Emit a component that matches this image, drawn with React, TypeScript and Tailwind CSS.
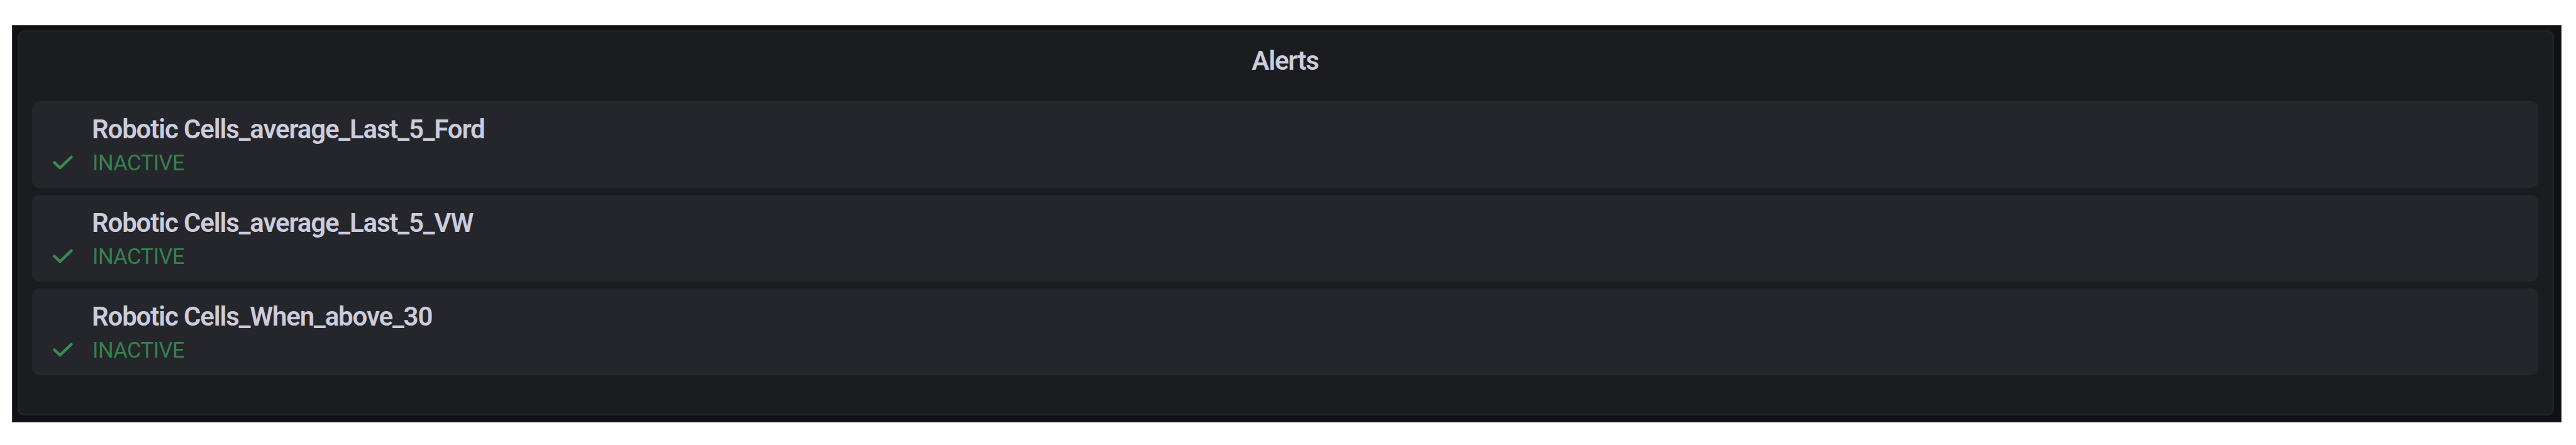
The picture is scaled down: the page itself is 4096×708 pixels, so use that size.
const alerts = [
  { name: "Robotic Cells_average_Last_5_Ford", state: "INACTIVE" },
  { name: "Robotic Cells_average_Last_5_VW", state: "INACTIVE" },
  { name: "Robotic Cells_When_above_30", state: "INACTIVE" },
];

function CheckIcon() {
  return (
    <svg viewBox="0 0 32 24" className="h-6 w-8 shrink-0" fill="none" stroke="#3b8a54">
      <path d="M2.5 11.6L11.4 20.2L29.4 2.8" strokeWidth="4.4" strokeLinecap="round" strokeLinejoin="round" />
    </svg>
  );
}

export default function App() {
  return (
    <div className="h-[708px] w-[4096px] bg-white pt-10 pl-[19px] font-['Roboto',sans-serif]">
      <div className="h-[632px] w-[4054px] border border-[#36373b] bg-[#111217] pt-[7px] pl-[8px]">
        <section className="flex h-[613px] w-[4033px] flex-col rounded-[10px] border-[3px] border-[#212226] bg-[#1b1c1f] pr-[22px] pl-5">
          <h2 className="flex h-[110px] shrink-0 items-center justify-center pb-[18px] text-[42px] leading-none font-semibold tracking-[-1.15px] text-[#ccccdc]">
            Alerts
          </h2>
          <ol className="flex flex-col gap-[11px]">
            {alerts.map(({ name, state }) => (
              <li key={name} className="h-[138px] rounded-[11px] bg-[#25262b] pt-[19px] pl-[33px]">
                <div className="pl-[62px] text-[42px] leading-[52px] font-semibold tracking-[-1.15px] whitespace-nowrap text-[#ccccdc]">
                  {name}
                </div>
                <div className="flex h-[54px] items-center">
                  <CheckIcon />
                  <span className="pl-[31px] text-[34.5px] leading-none tracking-[-0.5px] text-[#36804d]">{state}</span>
                </div>
              </li>
            ))}
          </ol>
        </section>
      </div>
    </div>
  );
}
